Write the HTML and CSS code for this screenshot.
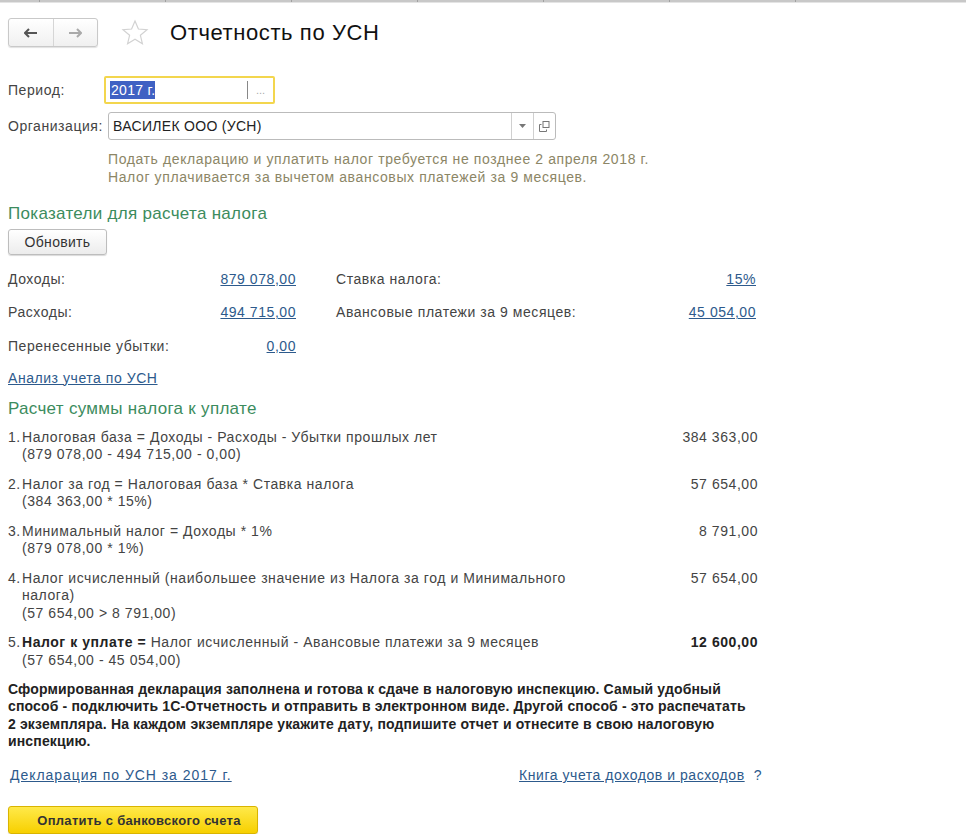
FILE: index.html
```html
<!DOCTYPE html>
<html lang="ru">
<head>
	<meta charset="UTF-8">
	<title>Отчетность по УСН</title>
	<link rel="stylesheet" href="styles.css">
</head>
<body>
	<div class="topbar">
		<span></span><span></span><span></span><span></span><span></span><span></span><span></span>
	</div>

	<div class="page">
		<header class="head">
			<div class="nav">
				<span class="nav-btn back">
					<svg width="14" height="10" viewBox="0 0 14 10"><path d="M1 5h12M5 1L1 5l4 4" fill="none" stroke="#555" stroke-width="2"/></svg>
				</span>
				<span class="nav-btn fwd">
					<svg width="14" height="10" viewBox="0 0 14 10"><path d="M1 5h12M9 1l4 4-4 4" fill="none" stroke="#aaa" stroke-width="2"/></svg>
				</span>
			</div>
			<svg class="star" width="28" height="28" viewBox="0 0 28 28"><path d="M14 2l3.4 8 8.6.7-6.6 5.6 2 8.4L14 20.2 6.6 24.7l2-8.4L2 10.7l8.6-.7z" fill="none" stroke="#d2d2d2" stroke-width="1.2"/></svg>
			<h1>Отчетность по УСН</h1>
		</header>

		<div class="form">
			<label class="f-label">Период:</label>
			<div class="field period">
				<span class="f-text"><span class="sel">2017 г.</span></span>
				<span class="f-btn dots">...</span>
			</div>

			<label class="f-label">Организация:</label>
			<div class="field org">
				<span class="f-text">ВАСИЛЕК ООО (УСН)</span>
				<span class="f-btn">
					<svg width="7" height="4" viewBox="0 0 7 4"><path d="M0 0h7L3.5 4z" fill="#777"/></svg>
				</span>
				<span class="f-btn">
					<svg width="11" height="11" viewBox="0 0 11 11"><rect x="4" y="0.5" width="6" height="6" fill="none" stroke="#777"/><path d="M2.5 3.5H0.5v7h7V8.5" fill="none" stroke="#777"/></svg>
				</span>
			</div>

			<div></div>
			<div class="hint">
				Подать декларацию и уплатить налог требуется не позднее 2 апреля 2018 г.<br>
				Налог уплачивается за вычетом авансовых платежей за 9 месяцев.
			</div>
		</div>

		<h2 class="group">Показатели для расчета налога</h2>
		<button class="btn">Обновить</button>

		<div class="params">
			<span>Доходы:</span><a class="num" href="#">879 078,00</a><span></span>
			<span>Ставка налога:</span><a class="num" href="#">15%</a>

			<span>Расходы:</span><a class="num" href="#">494 715,00</a><span></span>
			<span>Авансовые платежи за 9 месяцев:</span><a class="num" href="#">45 054,00</a>

			<span>Перенесенные убытки:</span><a class="num" href="#">0,00</a><span></span>
			<span></span><span></span>
		</div>

		<a class="link analysis" href="#">Анализ учета по УСН</a>

		<h2 class="group calc-title">Расчет суммы налога к уплате</h2>

		<div class="calc">
			<div class="item">
				<span class="n">1.</span>
				<span class="t">Налоговая база = Доходы - Расходы - Убытки прошлых лет<br>(879 078,00 - 494 715,00 - 0,00)</span>
				<span class="v">384 363,00</span>
			</div>
			<div class="item">
				<span class="n">2.</span>
				<span class="t">Налог за год = Налоговая база * Ставка налога<br>(384 363,00 * 15%)</span>
				<span class="v">57 654,00</span>
			</div>
			<div class="item">
				<span class="n">3.</span>
				<span class="t">Минимальный налог = Доходы * 1%<br>(879 078,00 * 1%)</span>
				<span class="v">8 791,00</span>
			</div>
			<div class="item">
				<span class="n">4.</span>
				<span class="t">Налог исчисленный (наибольшее значение из Налога за год и Минимального<br>налога)<br>(57 654,00 &gt; 8 791,00)</span>
				<span class="v">57 654,00</span>
			</div>
			<div class="item">
				<span class="n">5.</span>
				<span class="t"><b>Налог к уплате =</b> Налог исчисленный - Авансовые платежи за 9 месяцев<br>(57 654,00 - 45 054,00)</span>
				<span class="v"><b>12 600,00</b></span>
			</div>
		</div>

		<p class="note">Сформированная декларация заполнена и готова к сдаче в налоговую инспекцию. Самый удобный<br>
		способ - подключить 1С-Отчетность и отправить в электронном виде. Другой способ - это распечатать<br>
		2 экземпляра. На каждом экземпляре укажите дату, подпишите отчет и отнесите в свою налоговую<br>
		инспекцию.</p>

		<div class="reports">
			<a class="link wide" href="#">Декларация по УСН за 2017 г.</a>
			<span class="right"><a class="link" href="#">Книга учета доходов и расходов</a><span class="help">?</span></span>
		</div>

		<button class="btn pay">Оплатить с банковского счета</button>
	</div>
</body>
</html>
```

FILE: styles.css
```css
html, body {
	margin: 0;
	padding: 0;
	background: #fff;
}
body {
	font-family: "Liberation Sans", Arial, sans-serif;
	font-size: 14px;
	letter-spacing: 0.55px;
	color: #444;
	overflow: hidden;
	width: 966px;
	height: 834px;
}
h1, h2, p {
	margin: 0;
	padding: 0;
	font-weight: normal;
}
a {
	color: #2d5a8c;
}

.topbar {
	display: flex;
	height: 2px;
	background: #c8c8c8;
	border-bottom: 1px solid #e4e4e4;
	padding-left: 39px;
	overflow: hidden;
}
.topbar span {
	width: 125px;
	flex: none;
	border-left: 1px solid #a0a0a0;
}

.page {
	padding: 0 8px;
}

.head {
	display: flex;
	align-items: center;
	margin-top: 15px;
	height: 29px;
}
.nav {
	display: flex;
	width: 88px;
	height: 27px;
	border: 1px solid #c9c9c9;
	border-radius: 3px;
	background: linear-gradient(#fff, #f0f0f0);
	box-shadow: 0 1px 1px rgba(0,0,0,0.12);
}
.nav-btn {
	flex: 1;
	display: flex;
	align-items: center;
	justify-content: center;
}
.nav-btn.back {
	border-right: 1px solid #d6d6d6;
}
.star {
	margin-left: 23px;
	margin-right: 21px;
}
.head h1 {
	font-size: 22px;
	letter-spacing: 0.6px;
	color: #111;
}

.form {
	display: grid;
	grid-template-columns: 96px auto;
	justify-content: start;
	align-items: center;
	row-gap: 8px;
	margin-top: 29px;
}
.field {
	display: flex;
	height: 26px;
	border: 1px solid #bbb;
	border-radius: 3px;
	background: #fff;
	box-sizing: border-box;
}
.field.period {
	width: 171px;
	height: 28px;
	border: 2px solid #f3d64e;
	border-radius: 2px;
}
.field.org {
	width: 448px;
	margin-left: 4px;
	height: 28px;
}
.f-text {
	flex: 1;
	display: flex;
	align-items: center;
	padding-left: 4px;
	color: #222;
	letter-spacing: 0.3px;
}
.sel {
	background: #3f61c3;
	color: #fff;
	padding: 1px 0 1px 1px;
}
.f-btn {
	width: 21px;
	display: flex;
	align-items: center;
	justify-content: center;
	border-left: 1px solid #d0d0d0;
}
.f-btn.dots {
	width: 25px;
	color: #aaa;
	font-size: 11px;
	letter-spacing: 0;
	border-left: 1px solid #888;
	margin: 3px 0;
}
.hint {
	margin-left: 4px;
	margin-top: 2px;
	color: #8c8666;
	line-height: 18px;
	letter-spacing: 0.6px;
}

.group {
	margin-top: 18px;
	font-size: 17px;
	letter-spacing: 0.3px;
	color: #3c8c5e;
}
.group.calc-title {
	margin-top: 13px;
}
.btn {
	font-family: inherit;
	font-size: 14px;
	letter-spacing: 0.3px;
	color: #333;
	height: 26px;
	padding: 0;
	border: 1px solid #bdbdbd;
	border-radius: 3px;
	background: linear-gradient(#fff, #ececec);
	box-shadow: 0 1px 1px rgba(0,0,0,0.15);
	margin-top: 5px;
	width: 99px;
}

.params {
	display: grid;
	grid-template-columns: 200px 88px 40px 250px 170px;
	grid-auto-rows: 33.5px;
	align-items: center;
	margin-top: 7px;
	white-space: nowrap;
}
.params .num {
	text-align: right;
}
.analysis {
	display: inline-block;
	margin-top: 7px;
}

.calc {
	width: 750px;
	margin-top: 10px;
}
.item {
	display: grid;
	grid-template-columns: 14px 1fr auto;
	line-height: 17.5px;
	margin-bottom: 12px;
	color: #444;
}
.item b {
	color: #222;
}
.item .v {
	text-align: right;
}

.note {
	font-weight: bold;
	color: #222;
	line-height: 17.3px;
	margin-top: 1px;
	letter-spacing: 0.15px;
	white-space: nowrap;
}

.reports {
	display: flex;
	justify-content: space-between;
	width: 752px;
	margin-top: 17px;
	padding-left: 2px;
}
.link.wide {
	letter-spacing: 0.95px;
}
.help {
	margin-left: 9px;
	color: #2d5a8c;
}

.btn.pay {
	margin-top: 23px;
	width: 250px;
	height: 28px;
	padding-left: 12px;
	font-size: 13px;
	font-weight: bold;
	color: #333;
	border: 1px solid #d9b400;
	background: linear-gradient(#ffe94a, #f7d000);
}
```
